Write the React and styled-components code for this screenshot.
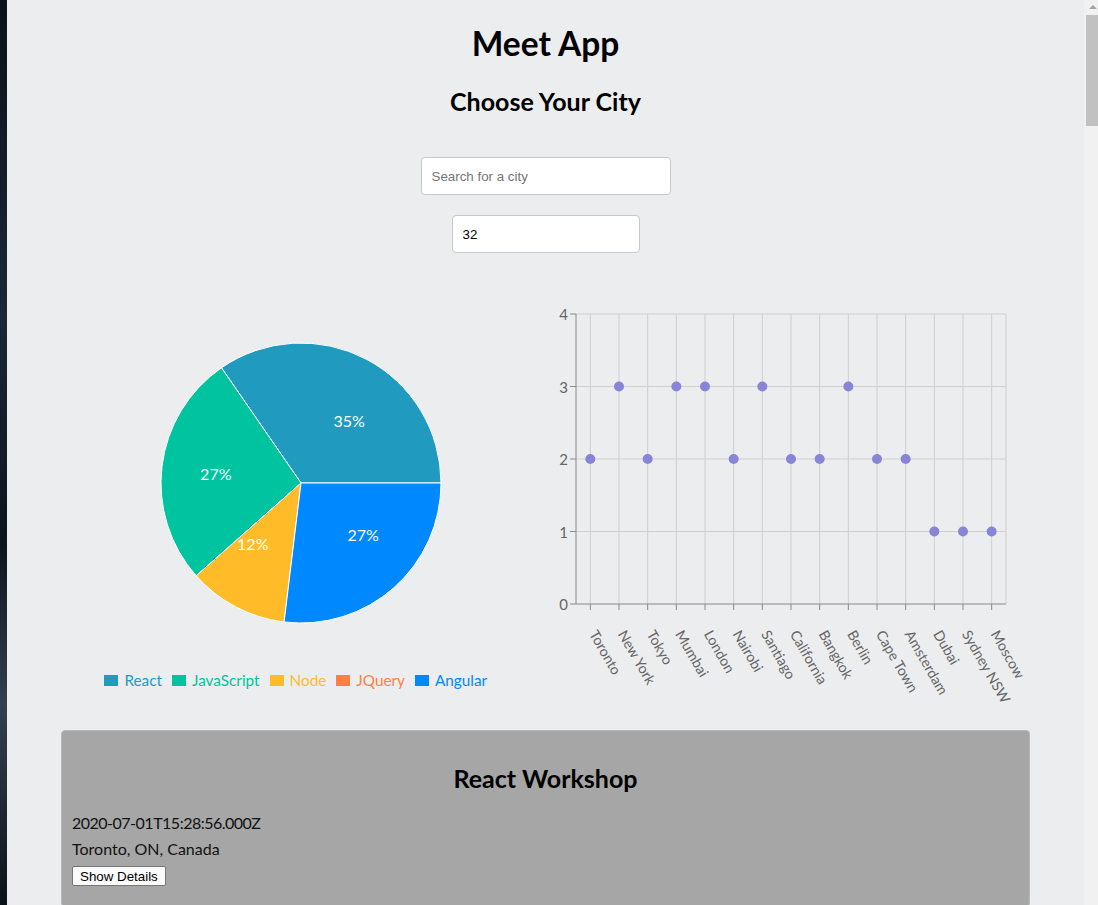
import React from 'react';
import styled, { createGlobalStyle } from 'styled-components';

const GlobalStyle = createGlobalStyle`
  html, body {
    margin: 0;
    padding: 0;
    overflow: hidden;
  }
  body {
    font-family: Lato, "Open Sans", sans-serif;
    background: #ecedef;
  }
`;

const Screen = styled.div`
  display: flex;
  width: 1098px;
  height: 905px;
  overflow: hidden;
`;

const DesktopEdge = styled.div`
  width: 7px;
  flex-shrink: 0;
  background: linear-gradient(180deg, #0b111a 0%, #1c2836 35%, #0d141d 60%, #34404e 78%, #0b1118 100%);
`;

const Main = styled.main`
  flex: 1;
  padding: 0 54px;
  background: #ecedef;
  text-align: center;
`;

const ScrollTrack = styled.div`
  position: relative;
  width: 14px;
  flex-shrink: 0;
  background: #f1f1f1;
`;

const ScrollThumb = styled.div`
  position: absolute;
  top: 15px;
  left: 2px;
  right: 0;
  height: 111px;
  background: #c1c1c1;
`;

const ScrollArrow = styled.div`
  position: absolute;
  top: 5px;
  left: 5px;
  width: 0;
  height: 0;
  border-left: 4px solid transparent;
  border-right: 4px solid transparent;
  border-bottom: 4px solid #a3a3a3;
`;

const Title = styled.h1`
  margin: 21px 0 0;
  font-size: 33.5px;
  line-height: 44px;
  font-weight: 700;
  color: #000;
`;

const SubTitle = styled.h2`
  margin: 20px 0 0;
  font-size: 25px;
  line-height: 32px;
  font-weight: 700;
  color: #000;
`;

const Field = styled.input`
  display: block;
  box-sizing: border-box;
  margin: ${(p) => p.$gap}px auto 0;
  width: ${(p) => p.$w}px;
  height: 38px;
  padding: 0 10px;
  border: 1px solid #c8c8c8;
  border-radius: 4px;
  background: #fff;
  font-family: "Liberation Sans", Arial, sans-serif;
  font-size: 13.333px;
  color: #000;
  outline: none;
  &::placeholder {
    color: #757575;
  }
`;

const ChartsRow = styled.section`
  display: grid;
  grid-template-columns: 1fr 1fr;
  margin-top: 20px;
`;

const ChartColumn = styled.div`
  display: flex;
  flex-direction: column;
  align-items: center;
`;

const ChartSvg = styled.svg`
  display: block;
  overflow: visible;
`;

const Legend = styled.ul`
  display: flex;
  justify-content: center;
  margin: 0;
  padding: 0 15px 0 0;
  list-style: none;
  height: 22px;
  line-height: 22px;
  font-size: 15.3px;
`;

const LegendItem = styled.li`
  display: flex;
  align-items: center;
  margin-right: 10px;
  color: ${(p) => p.$color};
  &:last-child {
    margin-right: 0;
  }
`;

const LegendSwatch = styled.span`
  width: 14px;
  height: 11px;
  margin-right: 6px;
  background: ${(p) => p.$color};
`;

const EventCard = styled.article`
  margin-top: 39px;
  padding: 0 10px 20px;
  border: 1px solid #b8b9b8;
  border-radius: 4px;
  background: #a5a6a5;
  text-align: left;
  color: #111;
`;

const EventTitle = styled.h2`
  margin: 0;
  padding: 31px 0 18px;
  text-align: center;
  font-size: 25px;
  line-height: 32px;
  font-weight: 700;
  color: #000;
`;

const EventLine = styled.p`
  margin: 0 0 4px;
  font-size: 16px;
  line-height: 22px;
  letter-spacing: ${(p) => (p.$tight ? '-0.5px' : '0')};
`;

const DetailsButton = styled.button`
  margin-top: 2px;
  padding: 1px 7px;
  height: 20px;
  border: 1px solid #767676;
  border-radius: 2px;
  background: #fbfbfb;
  font-family: "Liberation Sans", Arial, sans-serif;
  font-size: 13.333px;
  color: #000;
`;

const genres = [
  { name: 'React', value: 9, color: '#209bbf' },
  { name: 'JavaScript', value: 7, color: '#00c49f' },
  { name: 'Node', value: 3, color: '#ffbb28' },
  { name: 'JQuery', value: 0, color: '#ff8042' },
  { name: 'Angular', value: 7, color: '#0088fe' },
];

const cityCounts = [
  ['Toronto', 2], ['New York', 3], ['Tokyo', 2], ['Mumbai', 3], ['London', 3],
  ['Nairobi', 2], ['Santiago', 3], ['California', 2], ['Bangkok', 2], ['Berlin', 3],
  ['Cape Town', 2], ['Amsterdam', 2], ['Dubai', 1], ['Sydney NSW', 1], ['Moscow', 1],
];

const RAD = Math.PI / 180;

function GenrePie() {
  const cx = 240;
  const cy = 210;
  const r = 140;
  const total = genres.reduce((s, g) => s + g.value, 0);
  let start = 0;
  const slices = genres.map((g) => {
    const sweep = (g.value / total) * 360;
    const end = start + sweep;
    const x1 = cx + r * Math.cos(start * RAD);
    const y1 = cy - r * Math.sin(start * RAD);
    const x2 = cx + r * Math.cos(end * RAD);
    const y2 = cy - r * Math.sin(end * RAD);
    const mid = start + sweep / 2;
    const lx = cx + (r / 2) * Math.cos(mid * RAD);
    const ly = cy - (r / 2) * Math.sin(mid * RAD);
    const slice = {
      ...g,
      d: `M${cx},${cy} L${x1},${y1} A${r},${r} 0 ${sweep > 180 ? 1 : 0} 0 ${x2},${y2} Z`,
      lx,
      ly,
      pct: Math.round((g.value / total) * 100),
    };
    start = end;
    return slice;
  });

  return (
    <ChartSvg width="484" height="396" viewBox="0 0 484 396">
      {slices.map((s) => s.value > 0 && (
        <path key={s.name} d={s.d} fill={s.color} stroke="#fff" strokeWidth="1" />
      ))}
      {slices.map((s) => s.value > 0 && (
        <text
          key={s.name + '-label'}
          x={s.lx}
          y={s.ly - 1}
          fill="#fff"
          fontSize="16"
          textAnchor={s.lx > cx ? 'start' : 'end'}
          dominantBaseline="central"
        >
          {s.pct}%
        </text>
      ))}
    </ChartSvg>
  );
}

function CityScatter() {
  const left = 30;
  const right = 460;
  const top = 41;
  const bottom = 331;
  const band = (right - left) / cityCounts.length;
  const yOf = (v) => bottom - (v * (bottom - top)) / 4;
  const xOf = (i) => left + band / 2 + i * band;

  return (
    <ChartSvg width="484" height="418" viewBox="0 0 484 418" fontSize="15">
      <g stroke="#cfcfcf" strokeWidth="1">
        {[1, 2, 3, 4].map((v) => (
          <line key={'h' + v} x1={left} x2={right} y1={yOf(v)} y2={yOf(v)} />
        ))}
        {cityCounts.map((c, i) => (
          <line key={'v' + i} x1={xOf(i)} x2={xOf(i)} y1={top} y2={bottom} />
        ))}
        <line x1={right} x2={right} y1={top} y2={bottom} />
      </g>
      <g stroke="#8a8a8a" strokeWidth="1">
        <line x1={left} x2={left} y1={top} y2={bottom} />
        <line x1={left} x2={right} y1={bottom} y2={bottom} />
        {[0, 1, 2, 3, 4].map((v) => (
          <line key={'yt' + v} x1={left - 6} x2={left} y1={yOf(v)} y2={yOf(v)} />
        ))}
        {cityCounts.map((c, i) => (
          <line key={'xt' + i} x1={xOf(i)} x2={xOf(i)} y1={bottom} y2={bottom + 6} />
        ))}
      </g>
      <g fill="#666">
        {[0, 1, 2, 3, 4].map((v) => (
          <text key={'yl' + v} x={left - 8} y={yOf(v)} textAnchor="end" dominantBaseline="central">
            {v}
          </text>
        ))}
        {cityCounts.map(([name], i) => (
          <text
            key={'xl' + name}
            fontSize="14.2"
            transform={`translate(${xOf(i) - 1.5}, ${bottom + 30}) rotate(60)`}
          >
            {name}
          </text>
        ))}
      </g>
      <g fill="#8884d8">
        {cityCounts.map(([name, v], i) => (
          <circle key={'d' + name} cx={xOf(i)} cy={yOf(v)} r="5" />
        ))}
      </g>
    </ChartSvg>
  );
}

export default function App() {
  return (
    <>
      <GlobalStyle />
      <Screen>
        <DesktopEdge />
        <Main>
          <Title>Meet App</Title>
          <SubTitle>Choose Your City</SubTitle>
          <Field $w={250} $gap={40} type="text" placeholder="Search for a city" />
          <Field $w={188} $gap={20} type="number" defaultValue="32" />
          <ChartsRow>
            <ChartColumn>
              <GenrePie />
              <Legend>
                {genres.map((g) => (
                  <LegendItem key={g.name} $color={g.color}>
                    <LegendSwatch $color={g.color} />
                    {g.name}
                  </LegendItem>
                ))}
              </Legend>
            </ChartColumn>
            <ChartColumn>
              <CityScatter />
            </ChartColumn>
          </ChartsRow>
          <EventCard>
            <EventTitle>React Workshop</EventTitle>
            <EventLine $tight>2020-07-01T15:28:56.000Z</EventLine>
            <EventLine>Toronto, ON, Canada</EventLine>
            <DetailsButton>Show Details</DetailsButton>
          </EventCard>
        </Main>
        <ScrollTrack>
          <ScrollArrow />
          <ScrollThumb />
        </ScrollTrack>
      </Screen>
    </>
  );
}
